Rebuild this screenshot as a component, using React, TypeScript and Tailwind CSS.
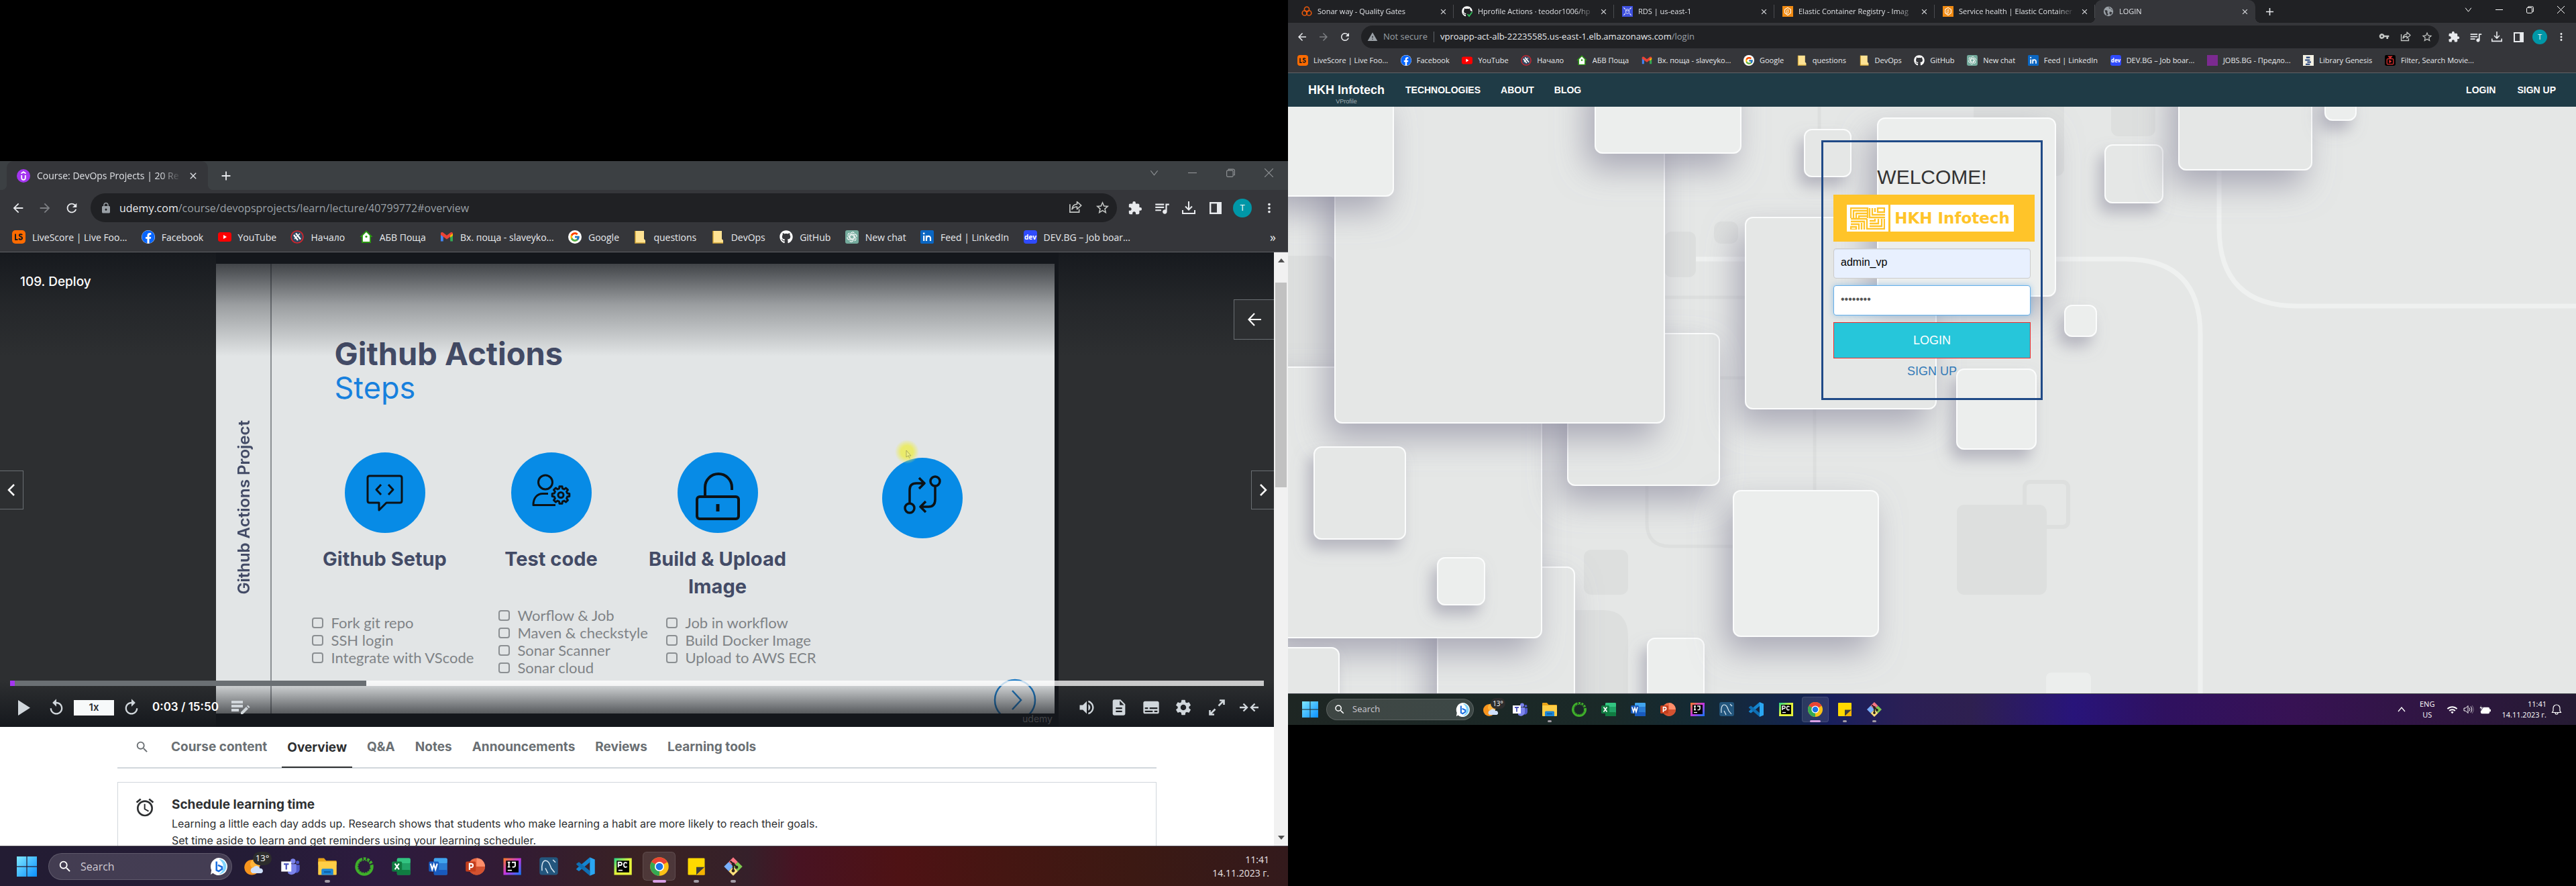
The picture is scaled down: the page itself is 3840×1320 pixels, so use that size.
import React from "react";
import {
  MdArrowBack, MdArrowForward, MdRefresh, MdLock, MdStarBorder, MdExtension, MdQueueMusic, MdMoreVert,
  MdClose, MdAdd, MdWarning, MdVpnKey, MdSearch, MdReplay, MdDescription, MdSettings,
  MdVolumeUp, MdSubtitles, MdOutlineAlarm, MdWifi,
} from "react-icons/md";
import { FaGithub, FaFacebook } from "react-icons/fa";
import { FcGoogle } from "react-icons/fc";

const UI = "font-['Open_Sans','Noto_Sans',sans-serif]";

/* ---------- small drawings ---------- */

const Share = ({ className }: { className: string }) => (
  <svg viewBox="0 0 16 16" className={className} fill="none" stroke="currentColor" strokeWidth="1.3">
    <path d="M1.5 5v9.5h11V11" />
    <path d="M4 11c.5-4 2.500-6 6-6V2l5 4.500-5 4.500V8c-3 0-4.500 1-6 3z" strokeLinejoin="round" />
  </svg>
);
const Download = ({ className }: { className: string }) => (
  <svg viewBox="0 0 20 20" className={className} fill="none" stroke="currentColor" strokeWidth="2">
    <path d="M10 0v12M5 7.500l5 5 5-5M1 13v5h18v-5" />
  </svg>
);
const SidePanel = ({ className }: { className: string }) => (
  <svg viewBox="0 0 18 18" className={className} fill="none" stroke="currentColor" strokeWidth="2.400">
    <rect x="1.2" y="1.2" width="15.6" height="15.6" />
    <path d="M13.500 1v16" strokeWidth="5" />
  </svg>
);

const WindowButtons = ({ big }: { big?: boolean }) => {
  const cell = big ? "flex w-[57px] items-center justify-center" : "flex w-[46px] items-center justify-center";
  const ic = big ? "size-[13px]" : "size-[11px]";
  const p = { className: ic, viewBox: "0 0 10 10", fill: "none", stroke: "currentColor", strokeWidth: 0.9 };
  return (
    <div className={big ? "flex h-[34px] text-[#8f9295]" : "flex h-7 text-white"}>
      <button aria-label="Search tabs" className={cell}><svg {...p}><path d="M1 2.500l4 5 4-5" /></svg></button>
      <button aria-label="Minimize" className={cell}><svg {...p}><path d="M0 5h10" /></svg></button>
      <button aria-label="Restore" className={cell}><svg {...p}><rect x=".5" y="2.200" width="7.300" height="7.300" rx="1.200" /><path d="M2.500 2V.8h5.500a1.500 1.500 0 0 1 1.500 1.500V7.500H8.500" /></svg></button>
      <button aria-label="Close window" className={cell}><svg {...p}><path d="M0 0l10 10M10 0L0 10" /></svg></button>
    </div>
  );
};

/* ---------- favicons (20 × 20 box) ---------- */

const fav: Record<string, React.ReactNode> = {
  udemy: <><circle cx="10" cy="10" r="10" fill="#a435f0" /><path d="M6.500 6.500L10 4.200l3.500 2.300M7.200 9v4a2.800 2.800 0 0 0 5.600 0V9" fill="none" stroke="#fff" strokeWidth="1.800" /></>,
  ls: <><rect width="20" height="20" rx="5" fill="#ff6b00" /><path d="M5 5.500v8.500h3.500M15 7.200c-.4-1.600-4.200-1.800-4.200.5 0 2.300 4.300 1.300 4.300 3.900 0 2.800-4.400 2.700-4.700.4" fill="none" stroke="#1a1a1a" strokeWidth="2" /></>,
  youtube: <><rect y="3" width="20" height="14" rx="3.500" fill="#f00" /><path d="M8 7v6l5-3z" fill="#fff" /></>,
  globe: <><circle cx="10" cy="10" r="9" fill="#33475f" stroke="#d8232a" strokeWidth="1.600" /><path d="M5 7l6 8M8 4.500l7 9" stroke="#fff" strokeWidth="2.200" /><path d="M6 13l8-8" stroke="#fff" strokeWidth="1.300" /></>,
  abv: <><path d="M10 1.500l7.500 7.500H16v9H4V9H2.500z" fill="#fff" stroke="#2b9a12" strokeWidth="1.800" /><circle cx="10" cy="9.500" r="1.600" fill="#2b9a12" /></>,
  gmail: <><path d="M1 16.500V4.500l3.800 3v9z" fill="#4285f4" /><path d="M19 16.500V4.500l-3.800 3v9z" fill="#34a853" /><path d="M1 5c0-2 2-2.500 3.500-1.500L10 7.800l5.500-4.300C17 2.500 19 3 19 5l-.2 2L10 13.500 1 7z" fill="#ea4335" /><path d="M15.200 7.500l3.800-2.500v3l-3.800 3z" fill="#fbbc04" /></>,
  folder: <><path d="M3 1h13v12l2 2v4H3z" fill="#fde293" /><path d="M3 1v18h15" fill="none" stroke="#d6a93a" strokeWidth="1.500" /></>,
  gpt: <><rect width="20" height="20" rx="3" fill="#74aa9c" />{[0, 60, 120, 180, 240, 300].map((a) => <path key={a} transform={`rotate(${a} 10 10)`} d="M8.200 9V5.400a2.800 2.800 0 0 1 5.200-1.100M8.200 7.200l3.600-2" fill="none" stroke="#fff" strokeWidth="1.100" />)}</>,
  linkedin: <><rect width="20" height="20" rx="2" fill="#0a66c2" /><path d="M5.200 8v8M9 16V8M9 12c0-4 6-4.500 6 0v4" stroke="#fff" strokeWidth="2.200" fill="none" /><circle cx="5.200" cy="4.800" r="1.400" fill="#fff" /></>,
  dev: <><rect width="20" height="20" rx="4" fill="#2f4bff" /><text x="10" y="13.500" textAnchor="middle" fontSize="10" fontWeight="700" fill="#fff" fontFamily="Open Sans">dev</text></>,
  jobs: <rect width="20" height="20" fill="#7b2a90" />,
  lib: <><rect width="20" height="20" fill="#f4f1e3" /><path d="M6 3h7v3H6zM4 8h9v2.500H4zM8 12h7v2.500H8zM5 16h8v2.500H5z" fill="#1d3c78" /></>,
  filter: <><rect width="20" height="20" rx="3" fill="#000" /><rect x="4" y="7" width="12" height="10" rx="1.500" fill="none" stroke="#e03131" strokeWidth="1.600" /><path d="M6 2l4 5 4-5M8.500 9.500v5l4-2.500z" fill="#e03131" stroke="#e03131" /></>,
  sonar: <g fill="none" stroke="#e8590c" strokeWidth="2"><circle cx="10" cy="6" r="4.500" /><circle cx="6" cy="13" r="4.500" /><circle cx="14" cy="13" r="4.500" /></g>,
  rds: <><rect width="20" height="20" fill="#3f51e0" /><path d="M3 3l3 3M17 3l-3 3M3 17l3-3M17 17l-3-3" stroke="#fff" strokeWidth="1.300" /><ellipse cx="10" cy="7.500" rx="3" ry="1.500" fill="none" stroke="#fff" /><path d="M7 7.500v5c0 2 6 2 6 0v-5" fill="none" stroke="#fff" /></>,
  ecr: <><rect width="20" height="20" fill="#f08a12" /><path d="M10 3l5.500 3.200v6.600L10 17l-5.500-4.200V6.200z" fill="none" stroke="#fff" strokeWidth="1.300" /><path d="M8 8l3-1.500v6L8 14z" fill="none" stroke="#fff" /></>,
  world: <><circle cx="10" cy="10" r="9" fill="#9aa0a6" /><path d="M3 8c3 0 4-1 5 1s-1 4 1 5-1 3-2 4M11 2c-1 3 2 3 3 3s1 3 4 3M12 11c3-1 4 1 5 1l-2 4-3-1z" fill="#35363a" /></>,
};

const Favicon = ({ name, className }: { name: string; className: string }) => {
  if (name === "github") return <FaGithub className={`${className} text-white`} />;
  if (name === "facebook") return <FaFacebook className={`${className} rounded-full bg-white text-[#0866ff]`} />;
  if (name === "google") return <span className={`${className} flex items-center justify-center rounded-full bg-white`}><FcGoogle className="size-4/5" /></span>;
  if (name === "actions")
    return (
      <span className={`${className} relative`}>
        <FaGithub className="size-full text-white" />
        <svg viewBox="0 0 10 10" className="absolute -right-px -bottom-px size-[10px]"><circle cx="5" cy="5" r="5" fill="#202124" /><path d="M1.500 5l2.500 3 4.500-6" fill="none" stroke="#2fbf5a" strokeWidth="1.800" /></svg>
      </span>
    );
  return <svg viewBox="0 0 20 20" className={className}>{fav[name]}</svg>;
};

/* ---------- browser chrome ---------- */

type TabInfo = { icon: string; title: string; active?: boolean };

const Tab = ({ tab, big }: { tab: TabInfo; big?: boolean }) => (
  <div
    className={[
      "relative flex items-center",
      big ? "w-[300px] gap-[10px] pr-[14px] pl-[15px] text-[14px]" : "w-[239px] gap-2 pr-[9px] pl-3 text-[11px]",
      tab.active
        ? "rounded-t-[10px] bg-[#35363a] before:absolute before:bottom-0 before:-left-2 before:size-2 before:bg-[radial-gradient(circle_at_0_0,transparent_8px,#35363a_8px)] after:absolute after:-right-2 after:bottom-0 after:size-2 after:bg-[radial-gradient(circle_at_100%_0,transparent_8px,#35363a_8px)]"
        : "after:absolute after:right-0 after:h-5 after:w-px after:bg-[#4a4c50]",
    ].join(" ")}
  >
    <Favicon name={tab.icon} className={big ? "size-5 shrink-0" : "size-4 shrink-0"} />
    <span className="min-w-0 flex-1 whitespace-nowrap text-[#dfe1e5] [mask-image:linear-gradient(to_right,black_85%,transparent)]">{tab.title}</span>
    <button aria-label="Close tab" className="text-[#dfe1e5]"><MdClose className={big ? "size-4" : "size-[13px]"} /></button>
  </div>
);

const bookmarks: [string, string][] = [
  ["ls", "LiveScore | Live Foo..."], ["facebook", "Facebook"], ["youtube", "YouTube"], ["globe", "Начало"],
  ["abv", "АБВ Поща"], ["gmail", "Вх. поща - slaveyko..."], ["google", "Google"], ["folder", "questions"],
  ["folder", "DevOps"], ["github", "GitHub"], ["gpt", "New chat"], ["linkedin", "Feed | LinkedIn"], ["dev", "DEV.BG – Job boar..."],
];
const moreBookmarks: [string, string][] = [["jobs", "JOBS.BG - Предло..."], ["lib", "Library Genesis"], ["filter", "Filter, Search Movie..."]];

function BrowserChrome({ tabs, big, children }: { tabs: TabInfo[]; big?: boolean; children: React.ReactNode }) {
  const btn = big ? "flex w-10 justify-center" : "flex w-8 justify-center";
  const ic = big ? "size-[22px]" : "size-[18px]";
  const items = big ? bookmarks : [...bookmarks, ...moreBookmarks];
  return (
    <header className={`${UI} border-b border-[#5f6165] bg-[#35363a] text-[#e8eaed]`}>
      <div className={big ? "flex h-[43px] bg-[#3c4043] pl-[10px]" : "flex h-[34px] bg-[#202124] pl-2"}>
        {tabs.map((t) => <Tab key={t.title} tab={t} big={big} />)}
        <button aria-label="New tab" className={big ? "ml-4" : "ml-3"}><MdAdd className={big ? "size-[22px]" : "size-[19px]"} /></button>
        <div className="ml-auto"><WindowButtons big={big} /></div>
      </div>
      <div className={big ? "flex items-center pt-[5px] pr-2 pl-[7px]" : "flex items-center pt-1 pr-[6px] pl-[5px]"}>
        <button aria-label="Back" className={btn}><MdArrowBack className={ic} /></button>
        <button aria-label="Forward" className={`${btn} text-[#7d7f83]`}><MdArrowForward className={ic} /></button>
        <button aria-label="Reload" className={btn}><MdRefresh className={ic} /></button>
        <div className={big ? "mr-[7px] ml-2 flex h-[43px] flex-1 items-center rounded-full bg-[#202124] pr-[2px] pl-[14px] text-[16px]" : "mr-[6px] ml-2 flex h-[34px] flex-1 items-center rounded-full bg-[#202124] pr-[2px] pl-[9px] text-[13px]"}>
          {children}
          <div className="ml-auto flex text-[#c4c7c5]">
            {!big && <button aria-label="Passwords" className={btn}><MdVpnKey className="size-4" /></button>}
            <button aria-label="Share this page" className={btn}><Share className={big ? "size-5" : "size-4"} /></button>
            <button aria-label="Bookmark this tab" className={btn}><MdStarBorder className={big ? "size-[23px]" : "size-[18px]"} /></button>
          </div>
        </div>
        <button aria-label="Extensions" className={btn}><MdExtension className={ic} /></button>
        <button aria-label="Media" className={btn}><MdQueueMusic className={big ? "size-[26px]" : "size-[21px]"} /></button>
        <button aria-label="Downloads" className={btn}><Download className={big ? "size-5" : "size-4"} /></button>
        <button aria-label="Side panel" className={btn}><SidePanel className={big ? "size-[18px]" : "size-[15px]"} /></button>
        <button aria-label="Profile" className={btn}>
          <span className={big ? "flex size-7 items-center justify-center rounded-full bg-[#0097a7] text-[13px] text-white" : "flex size-[22px] items-center justify-center rounded-full bg-[#0097a7] text-[11px] text-white"}>T</span>
        </button>
        <button aria-label="Menu" className={btn}><MdMoreVert className={ic} /></button>
      </div>
      <nav aria-label="Bookmarks" className={big ? "flex h-11 items-center pr-[18px] pl-[18px] text-[14px]" : "flex h-9 items-center pl-[14px] text-[11px]"}>
        <div className="flex flex-1 justify-between">
          {items.map(([icon, text]) => (
            <a key={text} href="#" className={big ? "flex items-center gap-[10px] whitespace-nowrap" : "flex items-center gap-2 whitespace-nowrap"}>
              <Favicon name={icon} className={big ? "size-5 shrink-0" : "size-4 shrink-0"} />
              {text}
            </a>
          ))}
        </div>
        <div className={big ? "w-[217px] text-right text-lg" : "w-[152px]"}>{big && "»"}</div>
      </nav>
    </header>
  );
}

/* ---------- taskbar ---------- */

const office = (dark: string, mid: string, light: string, path: string) => (
  <>
    <rect x="7" y="2" width="16" height="20" rx="1.500" fill={mid} />
    <rect x="7" y="2" width="16" height="6" rx="1.500" fill={light} />
    <rect x="7" y="16" width="16" height="6" rx="1.500" fill={dark} />
    <rect x="1" y="6" width="12" height="12" rx="1.500" fill={dark} />
    <path d={path} fill="none" stroke="#fff" strokeWidth="1.700" />
  </>
);

const jet = (a: string, b: string, c: string, id: string, path: string) => (
  <>
    <defs><linearGradient id={id} x2="1" y2="1"><stop stopColor={a} /><stop offset=".5" stopColor={b} /><stop offset="1" stopColor={c} /></linearGradient></defs>
    <rect x="2" y="2" width="21" height="20" fill={`url(#${id})`} />
    <rect x="5" y="5" width="15" height="14" fill="#000" />
    <path d={path} fill="none" stroke="#fff" strokeWidth="1.500" />
    <path d="M7 16.500h5" stroke="#fff" strokeWidth="1.300" />
  </>
);

const apps: { name: string; dot?: boolean; active?: boolean; art: React.ReactNode }[] = [
  {
    name: "Weather",
    art: <><circle cx="10" cy="13" r="9" fill="#f7941d" /><circle cx="14" cy="9" r="6" fill="#ffb43a" /><path d="M11 20a3.500 3.500 0 0 1 .5-6.800 4.500 4.500 0 0 1 8 1A3 3 0 0 1 21 20z" fill="#cfe0fb" /></>,
  },
  { name: "Teams", art: <><circle cx="15" cy="5.500" r="3" fill="#7b83eb" /><circle cx="20.500" cy="7" r="2" fill="#5059c9" /><path d="M17 10h6v6a4 4 0 0 1-6 3z" fill="#5059c9" /><path d="M9 9h10v8a6 6 0 0 1-10 3z" fill="#7b83eb" /><rect x="1" y="6" width="12" height="12" fill="#fff" /><path d="M4 9h6M7 9v6.500" stroke="#4b53bc" strokeWidth="1.800" /></> },
  { name: "File Explorer", dot: true, art: <><path d="M1 3q0-1 1-1h6l2.500 3H22q1 0 1 1v4H1z" fill="#e8a317" /><rect x="1" y="6" width="22" height="16" rx="1" fill="#ffce46" /><path d="M5 22v-6q0-1.500 1.500-1.500h11Q19 14.500 19 16v6z" fill="#1d86d6" /><path d="M8 18.500h8" stroke="#0b5a9d" strokeWidth="1.500" /></> },
  { name: "Anaconda", art: <><circle cx="12" cy="12" r="9.500" fill="none" stroke="#3faf2a" strokeWidth="3" strokeDasharray="42 1.500 3 1.500 3 1.500 3 1.500 3 1.500" /><circle cx="12" cy="12" r="7.500" fill="none" stroke="#3faf2a" strokeDasharray="2 1" /></> },
  { name: "Excel", art: office("#107c41", "#21a366", "#33c481", "M4.500 8.500l5 7M9.500 8.500l-5 7") },
  { name: "Word", art: office("#185abd", "#2b7cd3", "#41a5ee", "M3 8.500l2 7 2-6 2 6 2-7") },
  { name: "PowerPoint", art: <><circle cx="14" cy="12" r="10" fill="#ed6c47" /><path d="M14 2a10 10 0 0 1 10 10H14z" fill="#ff8f6b" /><path d="M4 12h20a10 10 0 0 1-20 0z" fill="#d35230" /><rect x="1" y="6" width="12" height="12" rx="1.500" fill="#c43e1c" /><path d="M5.500 16V8.700h2a2 2 0 0 1 0 4.300h-2" fill="none" stroke="#fff" strokeWidth="1.700" /></> },
  { name: "IntelliJ IDEA", art: jet("#fc801d", "#c335e0", "#087cfa", "ij", "M7 7h3M8.500 7v5.500M7 12.500h3M12 7h4v4q0 2-3.500 1.500") },
  { name: "MySQL Workbench", art: <><rect x="1" y="1" width="22" height="21" rx="3" fill="#23567d" /><path d="M4 17C3 10 5 5 8 5c4 0 5 4 7 9l4 5M8 14l3 6M17 4l3 3" fill="none" stroke="#dbe9f3" strokeWidth="1.200" /></> },
  { name: "Visual Studio Code", art: <><path d="M17 1l6 2.500v17L17 23z" fill="#2aa6f2" /><path d="M17 1v6L4 17.500l-3-2v-1z" fill="#1484cf" /><path d="M17 23v-6L4 6.500l-3 2v1z" fill="#0f6fb4" /></> },
  { name: "PyCharm", art: jet("#21d789", "#e6f23a", "#e6f23a", "pc", "M7 13V7h2.500a1.700 1.700 0 0 1 0 3.400H7M17.500 8q-4-2-4 2t4 2.200") },
  { name: "Chrome", active: true, art: <><circle cx="12" cy="12" r="11" fill="#fbc116" /><path d="M12 12L2.500 6.500a11 11 0 0 1 19 0z" fill="#ea4335" /><path d="M12 12l0 11A11 11 0 0 1 2.500 6.500z" fill="#34a853" /><path d="M12 12h0l4.500 2.500L12 23z" fill="#fbc116" /><circle cx="12" cy="12" r="5.600" fill="#fff" /><circle cx="12" cy="12" r="4.300" fill="#1a73e8" /></> },
  { name: "Sticky Notes", dot: true, art: <><rect x="2" y="2" width="20" height="20" rx="1" fill="#ffd900" /><path d="M12 22v-9.500h10z" fill="#3d3d3d" /><path d="M12 22l10-9.500V22z" fill="#f5b301" /></> },
  { name: "Git", dot: true, art: <><path d="M12 1l5.500 5.500L12 12 6.500 6.500z" fill="#f97583" /><path d="M17.500 6.500L23 12l-5.500 5.500L12 12z" fill="#7ec850" /><path d="M12 12l5.500 5.500L12 23l-5.500-5.500z" fill="#ffe07a" /><path d="M6.500 6.500L12 12l-5.500 5.500L1 12z" fill="#79b0ff" /><path d="M8.500 5.500l7.500 7M12 9v8" stroke="#2a2020" strokeWidth="1.800" /><circle cx="12" cy="9" r="1.900" fill="#2a2020" /><circle cx="12" cy="17" r="1.900" fill="#2a2020" /><circle cx="16" cy="12.800" r="1.900" fill="#2a2020" /></> },
];

function Taskbar({ big }: { big?: boolean }) {
  return (
    <footer
      className={[
        UI, "flex items-center border-t text-white",
        big
          ? "h-[60px] border-[#4b4650] bg-[linear-gradient(to_right,#231c33_0,#241c36_20%,#2d1b3f_29%,#321b33_40%,#3a2222_50%,#35202a_58%,#481322_62%,#4e1214_70%,#451612_78%,#3c1913_88%,#331a1c_100%)] pl-[25px]"
          : "h-[47px] border-[#474b52] bg-[linear-gradient(to_right,#1e2623_0,#1a2928_25%,#142a34_32%,#14244f_40%,#181f5c_42%,#2b1f55_48%,#2e2050_53%,#28147a_61%,#2f1160_68%,#371254_78%,#2f1640_90%,#251b33_100%)] pl-[21px]",
      ].join(" ")}
    >
      <button aria-label="Start">
        <svg viewBox="0 0 24 24" className={big ? "size-[30px]" : "size-6"}>
          <defs><linearGradient id="win" x2="1" y2="1"><stop stopColor="#7fe8ff" /><stop offset="1" stopColor="#0a8fff" /></linearGradient></defs>
          <path d="M0 0h11.500v11.500H0zM12.500 0H24v11.500H12.500zM0 12.500h11.500V24H0zM12.500 12.500H24V24H12.500z" fill="url(#win)" />
        </svg>
      </button>
      <label className={[
        "flex items-center rounded-full border border-white/15 bg-white/15",
        big ? "ml-[17px] h-10 w-[274px] gap-3 pr-[6px] pl-[13px] text-[16px]" : "ml-3 h-8 w-[220px] gap-[10px] pr-[5px] pl-[10px] text-[13px]",
      ].join(" ")}>
        <MdSearch className={big ? "size-[22px] shrink-0" : "size-[18px] shrink-0"} />
        <input aria-label="Search" placeholder="Search" className="min-w-0 flex-1 bg-transparent placeholder:text-[#cfcbd4] focus:outline-none" />
        <svg viewBox="0 0 24 24" className={big ? "size-[26px] shrink-0" : "size-[21px] shrink-0"}>
          <path d="M12 0a12 12 0 1 1-8 21l-3 2 1-6A12 12 0 0 1 12 0z" fill="#fff" /><path d="M12 1.500a10.500 10.500 0 0 1 0 21c8-4 9-15 0-21z" fill="#7fd4fb" /><path d="M9 5v12l3 1.500 4.500-3v-3L11 10" fill="none" stroke="#1b6fe0" strokeWidth="2.400" />
        </svg>
      </label>
      <div className={big ? "ml-1 flex h-full" : "ml-[3px] flex h-full"}>
        {apps.map((a) => (
          <button key={a.name} aria-label={a.name} className={big ? "relative flex w-[55px] items-center justify-center" : "relative flex w-11 items-center justify-center"}>
            {a.active && <span className={big ? "absolute inset-x-[3px] inset-y-2 rounded-md border border-white/10 bg-white/10" : "absolute inset-x-[2px] inset-y-1 rounded border border-white/10 bg-white/10"} />}
            <svg viewBox="0 0 24 24" className={big ? "relative size-[30px]" : "relative size-6"}>{a.art}</svg>
            {a.name === "Weather" && (
              <span className={big ? "absolute top-[8px] right-0 flex h-[20px] w-[28px] items-center justify-center rounded-full bg-[#2d2d2d] text-[13px]" : "absolute top-[6px] right-0 flex h-4 w-[22px] items-center justify-center rounded-full bg-[#2d2d2d] text-[10px]"}>13°</span>
            )}
            {a.active && <span className={big ? "absolute bottom-[5px] h-1 w-5 rounded-full bg-[#d9a0e6]" : "absolute bottom-1 h-[3px] w-4 rounded-full bg-[#d9a0e6]"} />}
            {a.dot && <span className={big ? "absolute bottom-[5px] h-1 w-2 rounded-full bg-[#a39ca6]" : "absolute bottom-1 h-[3px] w-[6px] rounded-full bg-[#a39ca6]"} />}
          </button>
        ))}
      </div>
      {big ? (
        <div className="mr-7 ml-auto text-right text-[14px] leading-5 text-[#e9e2e4]">11:41<br />14.11.2023 г.</div>
      ) : (
        <div className="mr-[21px] ml-auto flex items-center text-[11px] leading-4">
          <svg viewBox="0 0 12 12" className="mr-[21px] size-3" fill="none" stroke="#fff" strokeWidth="1.300"><path d="M1 9l5-6 5 6" /></svg>
          <div className="mr-[18px] text-center">ENG<br />US</div>
          <MdWifi className="mr-2 size-[17px]" />
          <svg viewBox="0 0 16 16" className="mr-2 size-4" fill="none" stroke="#fff"><path d="M1 6v4h2.500L7 13.500v-11L3.500 6zM9 5.500q2 2.500 0 5M11 3.500q3.500 4.500 0 9" /><path d="M13 2q4.500 6 0 12" stroke="#ffffff66" /></svg>
          <svg viewBox="0 0 18 16" className="mr-4 size-[17px]"><rect x="3" y="5" width="12" height="8" rx="1" fill="#fff" stroke="#fff" strokeWidth="2" /><path d="M16 7.500v3h1.500v-3z" fill="#fff" stroke="#fff" /><path d="M3 0L0 6h3l-1 4 4-6H3z" fill="#fff" stroke="#2a1a3c" strokeWidth=".8" /></svg>
          <div className="mr-[7px] text-right">11:41<br />14.11.2023 г.</div>
          <svg viewBox="0 0 16 16" className="size-4" fill="none" stroke="#fff" strokeWidth="1.200"><path d="M1.500 12.500h13L13 10V6A5 5 0 0 0 3 6v4zM6 13a2 2 0 0 0 4 0" /></svg>
        </div>
      )}
    </footer>
  );
}

/* ---------- course slide ---------- */

const gearPath = (cx: number, cy: number, r: number, depth: number, teeth: number) => {
  const pts: string[] = [];
  const step = (Math.PI * 2) / teeth;
  for (let i = 0; i < teeth; i++) {
    [[-0.32, r - depth], [-0.2, r], [0.2, r], [0.32, r - depth]].forEach(([o, rad]) => {
      const t = (i + o) * step;
      pts.push(`${(cx + rad * Math.sin(t)).toFixed(1)} ${(cy - rad * Math.cos(t)).toFixed(1)}`);
    });
  }
  return `M${pts.join("L")}Z`;
};

const stepArt = [
  <svg key="a" viewBox="0 0 57 57" className="size-[57px]" strokeWidth="3"><path d="M6 3h45q3 0 3 3v34q0 3-3 3H31L20 54V43H6q-3 0-3-3V6q0-3 3-3zM23 16l-7 7.500 7 7.500M34 16l7 7.500-7 7.500" /></svg>,
  <svg key="b" viewBox="0 0 58 57" className="size-[58px]" strokeWidth="3"><circle cx="20" cy="13" r="10.500" /><path d="M35 47H2C2 36 8 30 16 30h8" /><path d={gearPath(43, 32, 13, 3, 8)} /><circle cx="43" cy="32" r="4" /></svg>,
  <svg key="c" viewBox="0 -11 66 82" className="h-[82px] w-[66px]" strokeWidth="4"><rect x="2" y="36" width="62" height="33" rx="4" /><path d="M14 36V22a20 20 0 0 1 40 0v4" /><path d="M33 47v11" strokeWidth="5" /></svg>,
  <svg key="d" viewBox="0 0 56 68" className="h-[68px] w-[56px]" strokeWidth="3.500"><circle cx="47" cy="9" r="7" /><circle cx="9" cy="49" r="7" /><path d="M9 42V22q0-10 10-10h10M23 4l8 8-8 8M47 16v20q0 11-10 11H26M33 39l-8 8 8 8" /></svg>,
];

const steps = [
  { title: "Github Setup", w: "w-[248px]" },
  { title: "Test code", w: "w-[248px]" },
  { title: "Build & Upload Image", w: "w-[248px]" },
  { title: "", w: "w-[362px] pt-2" },
];

const Checks = ({ items, className }: { items: string[]; className: string }) => (
  <ul className={className}>
    {items.map((t) => (
      <li key={t} className="flex items-center gap-3 whitespace-nowrap">
        <span className="h-4 w-[17px] shrink-0 rounded-[4px] border-2 border-[#8b8f92]" />{t}
      </li>
    ))}
  </ul>
);

function Slide() {
  return (
    <div className="mt-[17px] mr-[6px] flex h-[670px] overflow-hidden bg-[#e2e5e6] font-[Inter,sans-serif] text-[#434b66]">
      <div className="flex w-[83px] items-center justify-center border-r-2 border-[#8b8f93] pt-[56px] pl-[4px]">
        <p className="rotate-180 text-[24px] leading-8 font-semibold whitespace-nowrap [writing-mode:vertical-rl]">Github Actions Project</p>
      </div>
      <div className="relative flex-1 pt-[108px]">
        <h2 className="pl-[94px] text-[47px] leading-[52px] font-bold">Github Actions</h2>
        <p className="pl-[94px] text-[45px] leading-[50px] text-[#1780dd]">Steps</p>
        <div className="mt-[71px] flex pl-[45px] text-center">
          {steps.map((s, i) => (
            <div key={i} className={`${s.w} flex flex-col items-center`}>
              <div className="flex size-[120px] items-center justify-center rounded-full bg-[#078be6] [&_svg]:fill-none [&_svg]:stroke-[#0c1216] [&_svg]:[stroke-linejoin:round]">{stepArt[i]}</div>
              <h3 className="mt-[18px] w-[240px] text-[29px] leading-[41px] font-bold">{s.title}</h3>
            </div>
          ))}
        </div>
        <div className="flex items-start pl-[60px] font-[Lato,sans-serif] text-[22px] leading-[26px] text-[#7f8386]">
          <Checks className="mt-[21px] w-[278px]" items={["Fork git repo", "SSH login", "Integrate with VScode"]} />
          <Checks className="mt-[10px] w-[250px]" items={["Worflow & Job", "Maven & checkstyle", "Sonar Scanner", "Sonar cloud"]} />
          <Checks className="mt-[21px]" items={["Job in workflow", "Build Docker Image", "Upload to AWS ECR"]} />
        </div>
        <svg viewBox="0 0 64 64" className="absolute right-[27px] -bottom-3 size-16" fill="none" stroke="#1b79c4" strokeWidth="2.500"><circle cx="32" cy="32" r="30" /><path d="M28 18l13 14-13 14" /></svg>
        <svg viewBox="0 0 36 36" className="absolute top-[262px] right-[202px] size-9"><defs><radialGradient id="halo"><stop offset=".5" stopColor="#ecec4d" stopOpacity=".8" /><stop offset="1" stopColor="#ecec4d" stopOpacity="0" /></radialGradient></defs><circle cx="18" cy="18" r="18" fill="url(#halo)" /><path d="M17 16v10l2.500-2 3 4M17 16l7 8h-4" fill="#eef08a" stroke="#9a9a50" strokeWidth=".8" /></svg>
      </div>
    </div>
  );
}

/* ---------- course page ---------- */

function Player() {
  const edge = "absolute top-[325px] flex h-[58px] items-center border border-[#6a6f73] bg-[#2d2f31] text-white";
  return (
    <section className="relative h-[707px] bg-[#2d2f31] text-white">
      <div className="mx-auto h-full w-[1256px] overflow-hidden bg-[#14171c]"><Slide /></div>
      <div className="pointer-events-none absolute inset-x-0 top-0 h-[155px] bg-[linear-gradient(to_bottom,rgba(20,23,28,0.9),rgba(20,23,28,0.35)_50%,transparent)]" />
      <div className="absolute inset-x-0 bottom-0 h-[69px] bg-[linear-gradient(to_top,rgba(20,23,28,0.95),rgba(20,23,28,0))]" />
      <h1 className="absolute top-8 left-[30px] font-[Inter,sans-serif] text-[19px] leading-6 font-medium">109. Deploy</h1>
      <button aria-label="Open course content" className="absolute top-[70px] right-0 flex h-[60px] w-[60px] items-center justify-center border border-r-0 border-[#6a6f73] bg-[#2d2f31]">
        <svg viewBox="0 0 20 20" className="size-5" fill="none" stroke="#fff" strokeWidth="2.200"><path d="M20 10H2M10 1L1.500 10l8.500 9" /></svg>
      </button>
      <button aria-label="Previous lecture" className={`${edge} left-0 w-[35px] justify-center border-l-0`}><svg viewBox="0 0 12 18" className="h-[18px] w-3" fill="none" stroke="#fff" strokeWidth="2.500"><path d="M10 1L2 9l8 8" /></svg></button>
      <button aria-label="Next lecture" className={`${edge} right-0 w-[34px] justify-center border-r-0`}><svg viewBox="0 0 12 18" className="h-[18px] w-3" fill="none" stroke="#fff" strokeWidth="2.500"><path d="M2 1l8 8-8 8" /></svg></button>
      <div className="absolute inset-x-[15px] bottom-[61px] flex h-2 bg-white/75"><div className="w-[7px] bg-[#a435f0]" /><div className="w-[524px] bg-[#6a6f73]" /></div>
      <p className="absolute right-[330px] bottom-1 font-[Inter,sans-serif] text-[14px] leading-4 text-white/20">udemy</p>
      <div className="absolute inset-x-0 bottom-0 flex h-[58px] items-center pr-[15px] pl-5 text-[#d1d7dc]">
        <button aria-label="Play" className="w-8"><svg viewBox="0 0 18 23" className="ml-[7px] h-[23px] w-[18px]" fill="currentColor"><path d="M0 0l18 11.500L0 23z" /></svg></button>
        <button aria-label="Rewind" className="ml-[18px]"><MdReplay className="size-7" /></button>
        <button className="ml-3 h-[23px] w-[60px] bg-[#f7f9fa] font-[Inter,sans-serif] text-[15px] font-semibold text-[#2d2f31]">1x</button>
        <button aria-label="Forward" className="ml-3 -scale-x-100"><MdReplay className="size-7" /></button>
        <span className="ml-[17px] w-[118px] font-[Inter,sans-serif] text-[17px] font-semibold whitespace-nowrap text-white">0:03 / 15:50</span>
        <button aria-label="Add note"><svg viewBox="0 0 28 24" className="h-6 w-7" fill="currentColor"><path d="M0 2h17v4H0zM0 8h17v4H0zM0 14h11v4H0zM14 19L22 11l3 3-8 8h-3zM23 10l1.500-1.500 3 3L26 13z" /></svg></button>
        <div className="ml-auto flex">
          <button aria-label="Volume" className="flex w-12 justify-center"><MdVolumeUp className="size-7" /></button>
          <button aria-label="Transcript" className="flex w-12 justify-center"><MdDescription className="size-7" /></button>
          <button aria-label="Captions" className="flex w-12 justify-center"><MdSubtitles className="size-7" /></button>
          <button aria-label="Settings" className="flex w-12 justify-center"><MdSettings className="size-7" /></button>
          <button aria-label="Full screen" className="flex w-[52px] items-center justify-center"><svg viewBox="0 0 24 24" className="size-6" fill="none" stroke="currentColor" strokeWidth="2.600"><path d="M14.500 9.500L22 2M16 1.500h6.500V8M9.500 14.500L2 22M8 22.500H1.500V16" /></svg></button>
          <button aria-label="Collapse" className="flex w-11 items-center justify-center"><svg viewBox="0 0 28 14" className="h-[14px] w-7" fill="none" stroke="currentColor" strokeWidth="2.400"><path d="M0 7h10M5.500 1.500L11 7l-5.500 5.500M28 7H18M22.500 1.500L17 7l5.500 5.500" /></svg></button>
        </div>
      </div>
    </section>
  );
}

function CourseScreen() {
  return (
    <div className="pt-[240px]">
      <BrowserChrome big tabs={[{ icon: "udemy", title: "Course: DevOps Projects | 20 Re", active: true }]}>
        <MdLock className="mr-[11px] size-[18px] text-[#9aa0a6]" />
        <span className="text-[#9aa0a6]"><span className="text-[#e8eaed]">udemy.com</span>/course/devopsprojects/learn/lecture/40799772#overview</span>
      </BrowserChrome>
      <div className="flex h-[884px] overflow-hidden">
        <main className="min-w-0 flex-1 bg-white font-[Inter,sans-serif] text-[#2d2f31]">
          <Player />
          <div className="mx-[175px]">
            <nav className="flex h-[62px] items-center border-b-2 border-[#d1d7dc] pl-[26px] text-[19px] font-bold text-[#6a6f73]">
              <button aria-label="Search course" className="mr-8"><MdSearch className="size-[22px]" /></button>
              {["Course content", "Overview", "Q&A", "Notes", "Announcements", "Reviews", "Learning tools"].map((t) => (
                <a key={t} href="#" className={t === "Overview" ? "relative top-px mr-[22px] flex h-full items-center border-b-2 border-[#2d2f31] px-2 pt-[2px] text-[#2d2f31]" : t === "Course content" ? "mr-[22px] whitespace-nowrap" : "mr-[30px] whitespace-nowrap"}>{t}</a>
              ))}
            </nav>
            <article className="mt-5 flex gap-6 border border-[#d1d7dc] pt-[21px] pb-20 pl-6">
              <MdOutlineAlarm className="size-8" />
              <div>
                <h2 className="text-[19px] leading-6 font-bold">Schedule learning time</h2>
                <p className="mt-1 text-[16px] leading-[25px]">Learning a little each day adds up. Research shows that students who make learning a habit are more likely to reach their goals.<br />Set time aside to learn and get reminders using your learning scheduler.</p>
              </div>
            </article>
          </div>
        </main>
        <div className="flex w-[21px] flex-col items-center bg-[#f1f1f1] py-[9px] text-[#505050]">
          <svg viewBox="0 0 10 6" className="h-[6px] w-[10px]" fill="currentColor"><path d="M0 6l5-6 5 6z" /></svg>
          <div className="mt-[30px] h-[305px] w-[17px] bg-[#c1c1c1]" />
          <svg viewBox="0 0 10 6" className="mt-auto h-[6px] w-[10px]" fill="currentColor"><path d="M0 0l5 6 5-6z" /></svg>
        </div>
      </div>
      <Taskbar big />
    </div>
  );
}

/* ---------- login page ---------- */

function Backdrop() {
  const T = ({ x, y, w, h, light, flat }: { x: number; y: number; w: number; h: number; light?: boolean; flat?: boolean }) => (
    <rect x={x} y={y} width={w} height={h} rx="11" fill={flat ? "#dddfde" : light ? "#eceeed" : "#e5e7e6"} stroke={flat ? "none" : "#fbfcfc"} strokeWidth="2" filter={flat ? undefined : w > 150 ? "url(#deep)" : "url(#soft)"} />
  );
  return (
    <svg aria-hidden="true" viewBox="0 0 1920 874" preserveAspectRatio="xMidYMid slice" className="absolute inset-0 size-full">
      <defs>
        <filter id="deep" filterUnits="userSpaceOnUse" x="-100" y="-150" width="2120" height="1200"><feDropShadow dx="-12" dy="22" stdDeviation="24" floodColor="#858398" floodOpacity=".62" /></filter>
        <filter id="soft" filterUnits="userSpaceOnUse" x="-100" y="-150" width="2120" height="1200"><feDropShadow dx="-8" dy="14" stdDeviation="11" floodColor="#858398" floodOpacity=".5" /></filter>
      </defs>
      <rect width="1920" height="874" fill="#e5e7e6" />
      <g fill="none" stroke="#eff1f0" strokeWidth="7"><path d="M560 227h688q112 0 112 112v540M1388 90v90q0 117 117 117h420" /></g>
      <g fill="none" stroke="#dddfde" strokeWidth="5"><path d="M792 0v40M785 440v140M535 560v60q0 35 35 35h100M561 284h130M640 404h50" /><rect x="1098" y="559" width="65" height="67" rx="8" strokeWidth="6" /></g>
      <T flat x={-20} y={222} w={89} h={180} />
      <T flat x={561} y={186} w={47} h={68} />
      <T flat x={635} y={171} w={36} h={33} />
      <T flat x={1227} y={-20} w={66} h={64} />
      <T flat x={1022} y={-20} w={135} h={123} />
      <T flat x={997} y={593} w={134} h={134} />
      <T flat x={441} y={660} w={66} h={67} />
      <path d="M400 750h70q37 0 37 40v90H400z" fill="#dddfde" />
      <rect x="1130" y="843" width="67" height="50" rx="8" fill="#eceeed" />
      <T x={223} y={686} w={204} h={220} />
      <T x={-20} y={388} w={398} h={403} />
      <T x={417} y={338} w={226} h={226} />
      <T x={70} y={-60} w={491} h={531} />
      <T light x={-20} y={-20} w={177} h={153} />
      <T light x={458} y={-60} w={217} h={129} />
      <T x={682} y={165} w={284} h={285} />
      <T light x={879} y={17} w={265} h={265} />
      <T x={770} y={34} w={69} h={70} />
      <T x={39} y={507} w={136} h={137} />
      <T light x={223} y={672} w={70} h={70} />
      <T x={-20} y={806} w={96} h={120} />
      <T light x={536} y={792} w={84} h={110} />
      <T light x={664} y={572} w={216} h={217} />
      <T light x={997} y={391} w={118} h={119} />
      <T light x={1158} y={296} w={47} h={46} />
      <T x={1218} y={57} w={86} h={86} />
      <T x={1328} y={-60} w={198} h={154} />
      <T light x={1546} y={-20} w={46} h={40} />
    </svg>
  );
}

const Banner = () => (
  <div className="flex h-[70px] w-[300px] items-center gap-[3px] bg-[#ffc429] pl-5">
    <div className="flex h-10 w-[62px] items-center justify-center bg-white">
      <svg viewBox="0 0 52 33" className="h-[33px] w-[52px]" fill="none" stroke="#ffc429" strokeWidth="2.300">
        <path d="M1 16V1h25v15M5 16V5h20M9 16V9h16M13 16v-3h12M29 1v14h23M33 1v10h19M37 1v6M41 1h10v6H41zM1 17h24M1 21h20v12M1 25h12v8M1 29h8v4H1zM17 23v10M25 17v15h26V17M29 20h8v-3M29 24h13v-7M29 28h18V17" />
      </svg>
    </div>
    <div className="flex h-10 w-[184px] items-center justify-center bg-white font-['DejaVu_Sans',sans-serif] text-[23px] font-bold whitespace-nowrap text-[#ffc429]">HKH Infotech</div>
  </div>
);

const caretToEnd = (e: React.FocusEvent<HTMLInputElement>) => e.currentTarget.setSelectionRange(8, 8);

function LoginScreen() {
  return (
    <div className="flex flex-col">
      <BrowserChrome
        tabs={[
          { icon: "sonar", title: "Sonar way - Quality Gates" }, { icon: "actions", title: "Hprofile Actions · teodor1006/hp" },
          { icon: "rds", title: "RDS | us-east-1" }, { icon: "ecr", title: "Elastic Container Registry - Imag" },
          { icon: "ecr", title: "Service health | Elastic Container" }, { icon: "world", title: "LOGIN", active: true },
        ]}
      >
        <MdWarning className="mr-2 size-4 text-[#9aa0a6]" />
        <span className="w-[75px] text-[13px] text-[#9aa0a6]">Not secure</span>
        <span className="mr-[9px] h-4 w-px bg-[#5f6368]" />
        <span className="text-[#9aa0a6]"><span className="text-[#e8eaed]">vproapp-act-alb-22235585.us-east-1.elb.amazonaws.com</span>/login</span>
      </BrowserChrome>
      <div className="font-['Liberation_Sans',sans-serif]">
        <nav className="flex h-[50px] items-center bg-[#1f3b46] px-[30px] text-[14px] font-bold text-white">
          <a href="#" className="relative mr-[31px] text-[18px]">HKH Infotech<span className="absolute inset-x-0 top-6 text-center text-[9px] leading-3 font-normal text-[#a5b1b5]">VProfile</span></a>
          <div className="flex gap-[30px]"><a href="#">TECHNOLOGIES</a><a href="#">ABOUT</a><a href="#">BLOG</a></div>
          <div className="ml-auto flex gap-8"><a href="#">LOGIN</a><a href="#">SIGN UP</a></div>
        </nav>
        <main className="relative h-[874px] overflow-hidden pt-[50px]">
          <Backdrop />
          <form className="relative mx-auto flex w-[330px] flex-col border-3 border-[#204a87] px-[15px] pt-[35px] pb-[27px]" onSubmit={(e) => e.preventDefault()}>
            <h1 className="mb-[10px] text-center text-[30px] leading-[33px] text-[#333]">WELCOME!</h1>
            <Banner />
            <input aria-label="Username" defaultValue="admin_vp" className="mt-[10px] h-[45px] rounded-[4px] border border-[#ccc] bg-[#e8f0fe] px-[10px] pb-[3px] text-[16px] text-black shadow-[inset_0_1px_1px_rgba(0,0,0,0.075)]" />
            <input aria-label="Password" type="password" autoFocus onFocus={caretToEnd} defaultValue="password" className="mt-[10px] h-[45px] rounded-[4px] border border-[#66afe9] bg-white px-[10px] pb-[3px] text-[16px] text-[#555] shadow-[0_0_8px_rgba(102,175,233,0.6)] outline-none" />
            <button className="mt-[10px] h-[54px] border border-[#ee2c2c] bg-[#26c6da] text-[18px] text-white">LOGIN</button>
            <a href="#" className="mt-[6px] text-center text-[18px] leading-[26px] text-[#337ab7]">SIGN UP</a>
          </form>
        </main>
      </div>
      <Taskbar />
    </div>
  );
}

export default function App() {
  return (
    <div className="grid min-h-screen grid-cols-2 items-start bg-black">
      <CourseScreen />
      <LoginScreen />
    </div>
  );
}
